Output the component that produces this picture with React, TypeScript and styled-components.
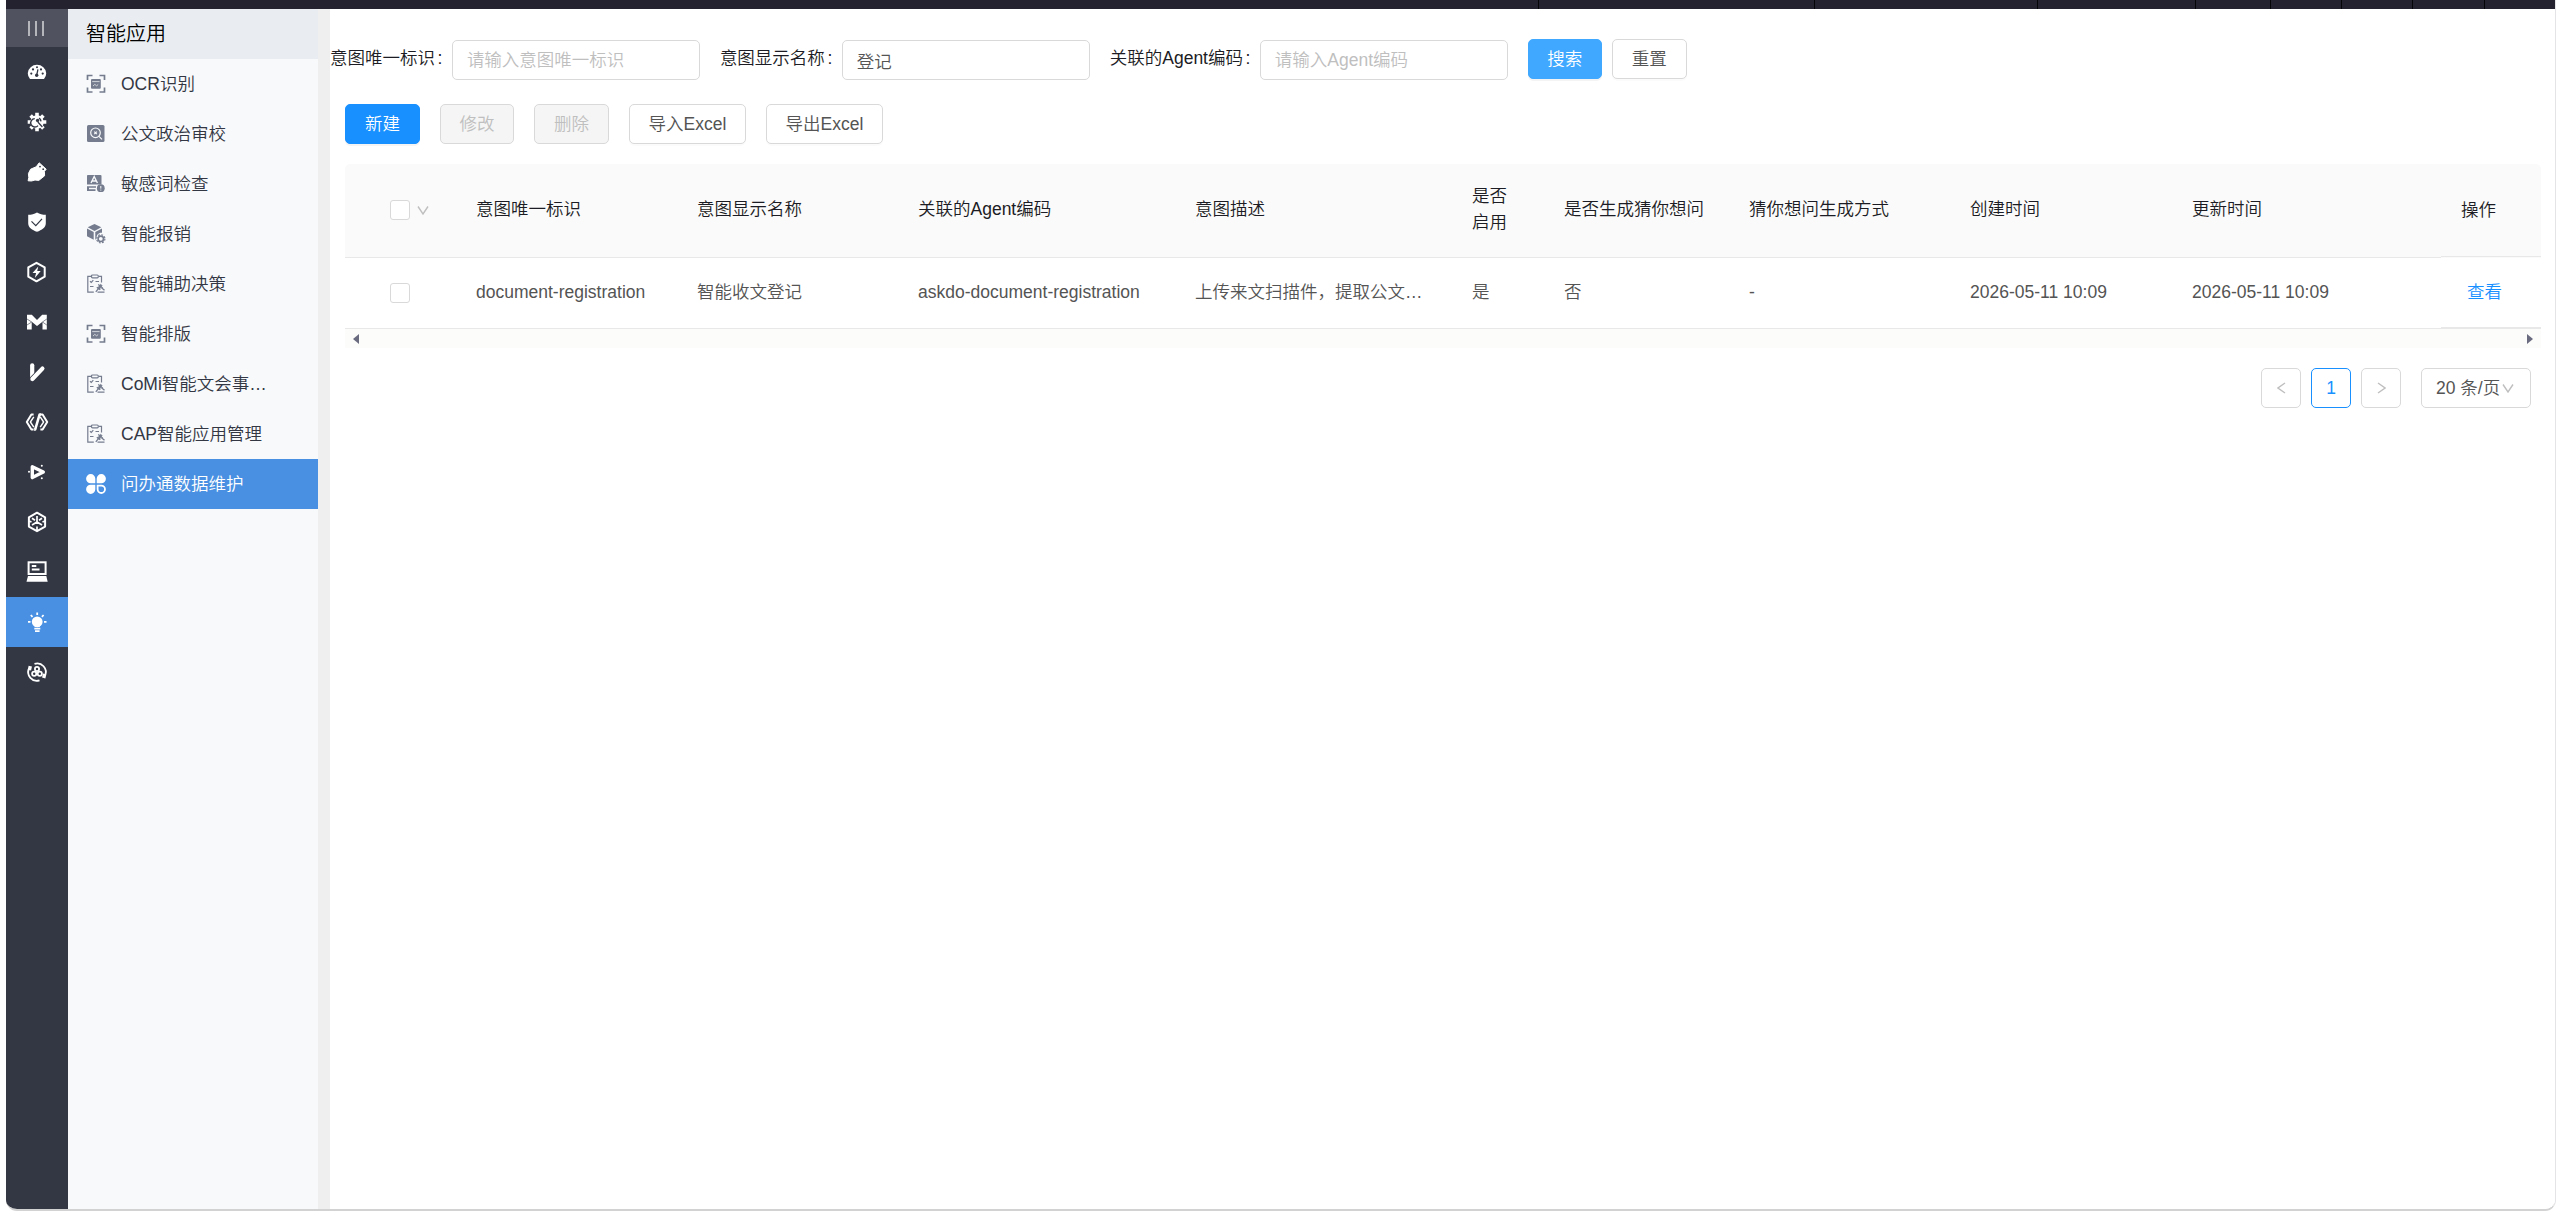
import React from "react";
import styled, { createGlobalStyle, css } from "styled-components";

const GlobalStyle = createGlobalStyle`
  * { box-sizing: border-box; }
  html, body { margin: 0; background: #fff; }
  body {
    height: 1213px;
    overflow: hidden;
    font-family: "Liberation Sans", "Noto Sans CJK SC", sans-serif;
    font-size: 17.5px;
    font-weight: 350;
    color: #545454;
  }
  button, input { font: inherit; }
`;

const Frame = styled.div`
  display: flex;
  flex-direction: column;
  width: 2550px;
  height: 1211px;
  margin-left: 6px;
  border-right: 1px solid #e4e4e6;
  border-bottom: 2px solid #d2d2d2;
  border-radius: 0 0 11px 11px;
  overflow: hidden;
`;

const TopBar = styled.header`
  display: flex;
  justify-content: flex-end;
  flex: none;
  height: 9px;
  background: #24222e;
`;

const TopCell = styled.div<{ $w: number }>`
  width: ${(p) => p.$w}px;
  border-left: 1px solid #050508;
`;

const Body = styled.div`
  display: flex;
  flex: 1;
  min-height: 0;
`;

const Rail = styled.nav`
  display: flex;
  flex-direction: column;
  width: 62px;
  flex: none;
  background: #333743;
`;

const RailToggle = styled.div`
  display: flex;
  align-items: center;
  justify-content: center;
  gap: 5px;
  height: 38px;
  padding-right: 2px;
  background: #50535f;
`;

const Bar = styled.i`
  width: 2px;
  height: 15px;
  background: #b5b6bb;
`;

const RailItem = styled.div<{ $active?: boolean }>`
  display: flex;
  align-items: center;
  justify-content: center;
  height: 50px;
  padding-bottom: 1px;
  color: #fff;
  --hole: ${(p) => (p.$active ? "#4990e2" : "#333743")};
  background: var(--hole);
`;

const Menu = styled.aside`
  width: 250px;
  flex: none;
  background: #f8f9fb;
`;

const MenuTitle = styled.div`
  height: 50px;
  padding-left: 18px;
  line-height: 51px;
  font-size: 20px;
  color: #000;
  background: #e9edf1;
`;

const MenuItem = styled.div<{ $active?: boolean }>`
  display: flex;
  align-items: center;
  gap: 15px;
  height: 50px;
  padding-left: 18px;
  line-height: 50px;
  white-space: nowrap;
  color: ${(p) => (p.$active ? "#fff" : "#333743")};
  background: ${(p) => (p.$active ? "#4990e2" : "transparent")};
  svg { color: ${(p) => (p.$active ? "#fff" : "#747c8e")}; }
`;

const Gutter = styled.div`
  width: 12px;
  flex: none;
  background: #efefef;
`;

const Main = styled.main`
  flex: 1;
  min-width: 0;
  background: #fff;
`;

const SearchRow = styled.div`
  display: flex;
  align-items: flex-start;
  padding-top: 30px;
  height: 95px;
`;

const Field = styled.label`
  display: flex;
  align-items: flex-start;
  margin-right: 20px;
`;

const Caption = styled.span`
  line-height: 39px;
  color: #1c1c24;
  white-space: nowrap;
  &::after { content: ":"; margin: 0 9.500px 0 2.500px; }
`;

const TextInput = styled.input`
  width: 248px;
  height: 40px;
  margin-top: 1px;
  padding: 0 14px;
  border: 1px solid #d9d9d9;
  border-radius: 5px;
  outline: none;
  background: #fff;
  color: #545454;
  &::placeholder { color: #bfbfbf; }
`;

type Kind = "primary" | "hover" | "disabled" | "plain";

const Button = styled.button<{ $kind?: Kind; $w: number }>`
  width: ${(p) => p.$w}px;
  height: 40px;
  padding: 0 0 3px;
  border: 1px solid #d9d9d9;
  border-radius: 5px;
  background: #fff;
  color: #545454;
  white-space: nowrap;
  box-shadow: 0 2px 0 rgba(0, 0, 0, 0.016);
  ${(p) => p.$kind === "primary" && css`background: #1890ff; border-color: #1890ff; color: #fff; box-shadow: 0 2px 0 rgba(0,0,0,.045);`}
  ${(p) => p.$kind === "hover" && css`background: #40a9ff; border-color: #40a9ff; color: #fff; box-shadow: 0 2px 0 rgba(0,0,0,.045);`}
  ${(p) => p.$kind === "disabled" && css`background: #f5f5f5; color: #bfbfbf; box-shadow: none;`}
`;

const SearchActions = styled.div`
  display: flex;
  gap: 10px;
`;

const Panel = styled.section`
  padding: 0 14px 0 15px;
`;

const Toolbar = styled.div`
  display: flex;
  gap: 20px;
  margin-bottom: 20px;
`;

const columns = "110px 221px 221px 277px 277px 92px 185px 221px 222px 270px 100px";

const HeadRow = styled.div`
  display: grid;
  grid-template-columns: ${columns};
  height: 94px;
  color: #1c1c24;
  background: #fafafa;
  border-radius: 5px 5px 0 0;
`;

const DataRow = styled.div`
  display: grid;
  grid-template-columns: ${columns};
  height: 71px;
`;

const Cell = styled.div`
  display: flex;
  align-items: center;
  padding: 0 20px 3px 21px;
  line-height: 26px;
  white-space: nowrap;
  border-bottom: 1px solid #e8e8e8;
`;

const PinnedHead = styled(Cell)`
  padding: 0 0 1px 20px;
  margin-bottom: 1px;
`;

const PinnedCell = styled(Cell)`
  padding: 0 0 2px 26px;
  border-bottom-width: 2px;
`;

const SelectCell = styled(Cell)`
  gap: 7px;
  padding: 0 0 1px 45px;
`;

const Wrapping = styled.span`
  white-space: normal;
  width: 36px;
`;

const Checkbox = styled.span`
  width: 20px;
  height: 20px;
  border: 1px solid #d9d9d9;
  border-radius: 3px;
  background: #fff;
`;

const Link = styled.a`
  color: #1890ff;
`;

const ScrollTrack = styled.div`
  display: flex;
  align-items: center;
  justify-content: space-between;
  height: 19px;
  padding: 0 8px;
  background: #fcfcfa;
  color: #6b6b80;
`;

const Pager = styled.div`
  display: flex;
  gap: 10px;
  padding: 20px 10px 0 0;
  justify-content: flex-end;
`;

const PageBox = styled.div<{ $current?: boolean }>`
  display: flex;
  align-items: center;
  justify-content: center;
  width: 40px;
  height: 40px;
  border: 1px solid ${(p) => (p.$current ? "#1890ff" : "#d9d9d9")};
  border-radius: 5px;
  color: ${(p) => (p.$current ? "#1890ff" : "#bfbfbf")};
`;

const PageSize = styled(PageBox)`
  justify-content: flex-start;
  width: 110px;
  margin-left: 10px;
  padding-left: 14px;
  padding-bottom: 3px;
  gap: 2px;
  color: #545454;
  white-space: nowrap;
  svg { margin-top: 3px; }
`;

const Glyph = styled.svg`
  flex: none;
  fill: none;
  stroke: #bfbfbf;
  stroke-width: 1.4;
`;

const Chevron = ({ w = 12, h = 9, d = "M1 .500l5 7.500 5-7.500" }) => (
  <Glyph width={w} height={h} viewBox={`0 0 ${w} ${h}`}>
    <path d={d} />
  </Glyph>
);

const hole = "var(--hole)";

const railIcons: React.ReactNode[] = [
  // dashboard gauge
  <>
    <path d="M5 19A9.2 8.6 0 1 1 19 19Z" fill="currentColor" />
    <g fill={hole}>
      <circle cx="6.3" cy="13.6" r="1.1" /><circle cx="8" cy="9.4" r="1.1" /><circle cx="12" cy="7.3" r="1" />
      <circle cx="16" cy="9.4" r="1.1" /><circle cx="17.7" cy="13.6" r="1.1" /><circle cx="11.7" cy="15.3" r="1.7" />
    </g>
    <path d="M11.7 15.3l1.2-6" stroke={hole} strokeWidth="1.3" />
  </>,
  // gear with wrench
  <>
    <g stroke="currentColor" strokeWidth="3.6">
      <path d="M12 2.700v18.600M2.700 12h18.600M5.600 5.600l12.800 12.800M18.400 5.600L5.600 18.400" />
    </g>
    <circle cx="12" cy="12" r="6.7" fill="currentColor" />
    <path d="M9.800 8.600a4.200 4.200 0 1 0 3.200 7M14 8.200a4 4 0 0 1 2 3.200" fill="none" stroke={hole} strokeWidth="1.400" />
    <path d="M12.800 12l4.600 5" stroke={hole} strokeWidth="1.200" />
    <circle cx="12.600" cy="10.400" r="1.700" fill={hole} />
  </>,
  // tag
  <>
    <path d="M14.200 2.800l7 6.400-1.800 2.200.2 4.400-5.800 4.600-3.800-.4-3.500 1-3.400-.2.7-3.400-.4-3.800 2.200-4.400 5.600-2.400z" fill="currentColor" stroke="currentColor" strokeWidth="1" strokeLinejoin="round" />
    <circle cx="15" cy="6.600" r=".9" fill={hole} /><circle cx="18.200" cy="9.200" r=".9" fill={hole} />
  </>,
  // shield
  <>
    <path d="M12 2.400c2.600 1.700 5.600 2.300 8.800 2.300v8.500c0 4.300-4 6.800-8.800 8.600-4.800-1.800-8.800-4.300-8.800-8.600V4.700c3.200 0 6.200-.6 8.800-2.300z" fill="currentColor" />
    <path d="M6.500 11.400l4.300 4.200 6.200-6.800" fill="none" stroke={hole} strokeWidth="1.200" />
  </>,
  // hexagon bolt
  <>
    <path d="M11.500 2.800l8.200 4.600v9.300l-8.200 4.600-8.200-4.600V7.400z" fill="none" stroke="currentColor" strokeWidth="2" strokeLinejoin="round" />
    <path d="M13.300 6.500L7.500 13h3.600l-1.300 5 5.900-7h-3.500z" fill="currentColor" />
  </>,
  // letter-shaped mark
  <>
    <path d="M2 4.800h4.800L12 10l5.200-5.200h4.600v14.600h-4.300v-7.600L12 16l-5.300-4.200v7.600H2z" fill="currentColor" />
    <path d="M2 9l4.700 3M21.800 9l-4.300 3M2 15l4.700-3M21.800 15l-4.300-3" stroke={hole} strokeWidth=".6" />
  </>,
  // crossing strokes
  <g stroke="currentColor" strokeWidth="4.200" strokeLinecap="round">
    <path d="M7.200 5.300V19" />
    <path d="M17.400 8.600L7.600 18.800" stroke={hole} strokeWidth="5.600" />
    <path d="M17.400 8.600L7.400 19" />
  </g>,
  // code brackets
  <g fill="none" stroke="currentColor" strokeLinejoin="round">
    <path d="M8.600 4.500H6.400L1.800 12l4.600 7.500h2.200M15.400 19.500h2.200L22.200 12l-4.600-7.500h-2.200" strokeWidth="2" />
    <path d="M8.800 6.800L5.400 12l3.400 5.200M15.200 17.200l3.400-5.200-3.400-5.200" strokeWidth="1.400" />
    <path d="M9 19.500h1.200L14.600 4.500h1.400" strokeWidth="2.600" />
  </g>,
  // play triangle
  <>
    <path d="M7.300 6.800l11 5.200-11 5.600z" fill="none" stroke="currentColor" strokeWidth="3.400" strokeLinejoin="round" />
    <g fill="currentColor"><circle cx="4" cy="11.800" r="1" /><circle cx="16.800" cy="5.700" r="1" /><circle cx="16.800" cy="18.300" r="1" /></g>
  </>,
  // cube
  <g fill="none" stroke="currentColor" strokeWidth="2">
    <path d="M12 2.700l8.100 4.600v9.300L12 21.200l-8.100-4.600V7.300z" strokeLinejoin="round" />
    <path d="M12 6v6l-5 3M12 12l5 3M7 8.300l3 2M17 8.300l-3 2M12 16.500v4M4 11l2.500 1M20 11l-2.500 1" strokeWidth="1.700" />
  </g>,
  // laptop
  <>
    <rect x="3.600" y="2.300" width="17" height="11.700" fill="none" stroke="currentColor" strokeWidth="2" />
    <path d="M6.800 6h4.500M6.800 9.500h7.700" stroke="currentColor" strokeWidth="2" />
    <path d="M3 16h18.300l1.400 5.800H1.500z" fill="currentColor" />
  </>,
  // bulb
  <>
    <circle cx="12.200" cy="11.800" r="5.400" fill="currentColor" />
    <path d="M9.600 15h5.200v2H9.600z" fill="currentColor" />
    <path d="M9.300 18.600h6M10 21.200h4.600" stroke="currentColor" strokeWidth="1.700" />
    <path d="M12.200 2.500V5M5.800 5l1.700 1.800M18.600 5l-1.700 1.800M3 11.800h2.500M19 11.800h2.500" stroke="currentColor" strokeWidth="1.800" />
  </>,
  // orbit of three rings
  <g fill="none" stroke="currentColor" strokeWidth="1.800">
    <path d="M4 8.500A8.600 8.600 0 0 0 14.500 20.300M9.500 3.800A8.600 8.600 0 0 1 20 15.500" />
    <path d="M5.300 6.200l-.9 4M18.700 18l1-4" strokeWidth="3.400" />
    <circle cx="12" cy="9" r="2.100" /><circle cx="9.200" cy="13.800" r="2.100" /><circle cx="14.800" cy="13.800" r="2.100" />
  </g>,
];

const scan = (
  <>
    <path d="M1.500 6V1.500h5M13.500 1.500h5V6M18.500 13.500v4.500h-5M6.500 18h-5v-4.500" fill="none" stroke="currentColor" strokeWidth="1.700" />
    <rect x="5" y="5" width="9.800" height="9.800" rx="1" fill="currentColor" />
    <path d="M6.200 7.600h7.400M7 12l1.800-1.600 1.800 1.400 1.600-1.300" fill="none" stroke="#f8f9fb" strokeWidth=".7" />
  </>
);

const clipboard = (
  <g fill="none" stroke="currentColor" strokeWidth="1.200">
    <path d="M6 2.300H1.800v15.900h6M13 2.300h2.500v6.200" />
    <rect x="5.500" y="1" width="6.800" height="2.800" rx="1" />
    <path d="M4 7.200l1.300 1.200 2-2.200M9.500 7.500h3.500M4 12.500h3.500M11.500 18.200h7" />
    <path d="M12.200 10.500l4.600 3.600M10.800 13.200l3.500 2.600" />
    <path d="M14.400 10.200l-2.800 4 1.800 1.300 2.800-4z" fill="currentColor" strokeWidth=".6" />
    <path d="M12.400 14.600l-2.600 3.200M15.500 13.800l3 2.400" strokeWidth="1.300" />
  </g>
);

const audit = (
  <>
    <rect x="1" y="1" width="17.500" height="17" rx="1.500" fill="currentColor" />
    <g fill="none" stroke="#f8f9fb" strokeWidth="1.200">
      <circle cx="9.500" cy="8.800" r="4.800" /><path d="M13 12.300l3 3M8.300 7.600l2.500 2.500M10.800 7.600l-2.500 2.500" />
    </g>
  </>
);

const wordCheck = (
  <>
    <path d="M1.500 1h13a1 1 0 0 1 1 1v8.500H1V1.500z" fill="currentColor" />
    <path d="M5 9l3.200-6.500L11.400 9M6.200 7h4" fill="none" stroke="#f8f9fb" strokeWidth="1.400" />
    <path d="M1 12.300h9v1.500H3v1.500h6.500V17H1z" fill="currentColor" />
    <circle cx="14.800" cy="14.200" r="3.900" fill="currentColor" />
    <path d="M14.800 12v2.600M14.800 15.600v1" stroke="#f8f9fb" strokeWidth="1" />
  </>
);

const expense = (
  <>
    <path d="M8.500 0l6.800 3.300-6.800 3.600-6.800-3.600z" fill="currentColor" />
    <path d="M1 4.600l6.700 3.500v7.600L1 12.200zM9.300 8.100L16 4.600v4.200c-3.500-.2-5.600 2-5.700 6.300l-1 .6z" fill="currentColor" />
    <circle cx="14.800" cy="14.800" r="2.700" fill="none" stroke="currentColor" strokeWidth="1.600" />
    <circle cx="14.800" cy="14.800" r="4.100" fill="none" stroke="currentColor" strokeWidth="1.200" strokeDasharray="1.800 1.420" />
  </>
);

const clover = (
  <>
    <path d="M9.300 9.300V4.700A4.600 4.600 0 1 0 4.700 9.300zM10.700 9.300V4.700A4.600 4.600 0 1 1 15.300 9.300zM9.300 10.700v4.600a4.600 4.600 0 1 1-4.600-4.600z" fill="currentColor" />
    <path d="M11.600 11.600h3.700a3.700 3.700 0 1 1-3.700 3.700z" fill="none" stroke="currentColor" strokeWidth="1.800" />
  </>
);

const menu: { label: string; icon: React.ReactNode; active?: boolean }[] = [
  { label: "OCR识别", icon: scan },
  { label: "公文政治审校", icon: audit },
  { label: "敏感词检查", icon: wordCheck },
  { label: "智能报销", icon: expense },
  { label: "智能辅助决策", icon: clipboard },
  { label: "智能排版", icon: scan },
  { label: "CoMi智能文会事…", icon: clipboard },
  { label: "CAP智能应用管理", icon: clipboard },
  { label: "问办通数据维护", icon: clover, active: true },
];

const topCells = [276, 223, 158, 75, 71, 71, 72, 71];

const headings = ["意图唯一标识", "意图显示名称", "关联的Agent编码", "意图描述", "是否启用", "是否生成猜你想问", "猜你想问生成方式", "创建时间", "更新时间"];
const record = ["document-registration", "智能收文登记", "askdo-document-registration", "上传来文扫描件，提取公文…", "是", "否", "-", "2026-05-11 10:09", "2026-05-11 10:09"];

export default function App() {
  return (
    <>
      <GlobalStyle />
      <Frame>
        <TopBar>{topCells.map((w, i) => <TopCell key={i} $w={w} />)}</TopBar>
        <Body>
          <Rail>
            <RailToggle><Bar /><Bar /><Bar /></RailToggle>
            {railIcons.map((icon, i) => (
              <RailItem key={i} $active={i === 11}>
                <svg width="24" height="24" viewBox="0 0 24 24">{icon}</svg>
              </RailItem>
            ))}
          </Rail>
          <Menu>
            <MenuTitle>智能应用</MenuTitle>
            {menu.map((m) => (
              <MenuItem key={m.label} $active={m.active}>
                <svg width="20" height="20" viewBox="0 0 20 20">{m.icon}</svg>
                {m.label}
              </MenuItem>
            ))}
          </Menu>
          <Gutter />
          <Main>
            <SearchRow>
              <Field><Caption>意图唯一标识</Caption><TextInput placeholder="请输入意图唯一标识" /></Field>
              <Field><Caption>意图显示名称</Caption><TextInput defaultValue="登记" /></Field>
              <Field><Caption>关联的Agent编码</Caption><TextInput placeholder="请输入Agent编码" /></Field>
              <SearchActions>
                <Button $kind="hover" $w={74}>搜索</Button>
                <Button $w={75}>重置</Button>
              </SearchActions>
            </SearchRow>
            <Panel>
              <Toolbar>
                <Button $kind="primary" $w={75}>新建</Button>
                <Button $kind="disabled" $w={74}>修改</Button>
                <Button $kind="disabled" $w={75}>删除</Button>
                <Button $w={117}>导入Excel</Button>
                <Button $w={117}>导出Excel</Button>
              </Toolbar>
              <HeadRow>
                <SelectCell><Checkbox /><Chevron /></SelectCell>
                {headings.map((h) => (
                  <Cell key={h}>{h === "是否启用" ? <Wrapping>{h}</Wrapping> : h}</Cell>
                ))}
                <PinnedHead>操作</PinnedHead>
              </HeadRow>
              <DataRow>
                <SelectCell><Checkbox /></SelectCell>
                {record.map((v, i) => <Cell key={i}>{v}</Cell>)}
                <PinnedCell><Link>查看</Link></PinnedCell>
              </DataRow>
              <ScrollTrack>
                <svg width="6" height="10" viewBox="0 0 6 10"><path d="M6 0v10L0 5z" fill="currentColor" /></svg>
                <svg width="6" height="10" viewBox="0 0 6 10"><path d="M0 0v10l6-5z" fill="currentColor" /></svg>
              </ScrollTrack>
              <Pager>
                <PageBox><Chevron w={9} h={12} d="M8 1L1 6l7 5" /></PageBox>
                <PageBox $current>1</PageBox>
                <PageBox><Chevron w={9} h={12} d="M1 1l7 5-7 5" /></PageBox>
                <PageSize>20 条/页<Chevron /></PageSize>
              </Pager>
            </Panel>
          </Main>
        </Body>
      </Frame>
    </>
  );
}
